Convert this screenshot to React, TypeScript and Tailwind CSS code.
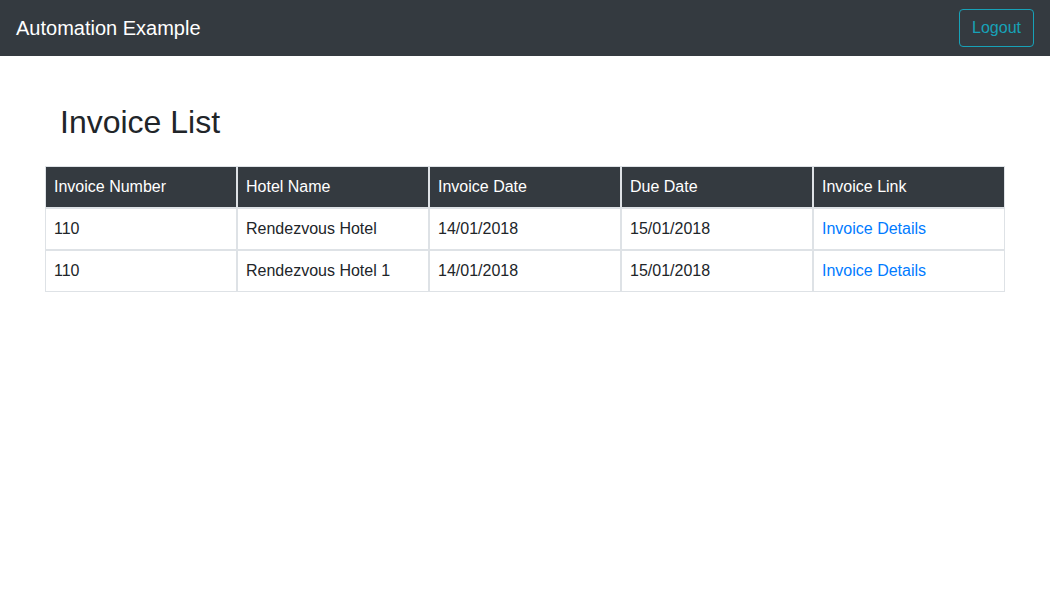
import React from 'react';

interface Invoice {
  number: string;
  hotel: string;
  invoiceDate: string;
  dueDate: string;
}

const invoices: Invoice[] = [
  { number: '110', hotel: 'Rendezvous Hotel', invoiceDate: '14/01/2018', dueDate: '15/01/2018' },
  { number: '110', hotel: 'Rendezvous Hotel 1', invoiceDate: '14/01/2018', dueDate: '15/01/2018' },
];

const columns = ['Invoice Number', 'Hotel Name', 'Invoice Date', 'Due Date', 'Invoice Link'];

const App: React.FC = () => {
  return (
    <div className="min-h-screen bg-white text-[#212529] font-['Liberation_Sans',Arial,sans-serif] text-base">
      <nav className="h-14 bg-[#343a40] flex items-center justify-between px-4">
        <span className="text-white text-xl leading-[30px]">Automation Example</span>
        <button className="h-[38px] px-3 border border-[#17a2b8] text-[#17a2b8] rounded text-base leading-6">
          Logout
        </button>
      </nav>

      <div className="w-[960px] mx-auto">
        <h2 className="px-[15px] mt-[47px] mb-[25px] text-[32px] leading-[38px] font-normal">Invoice List</h2>

        <table className="w-full border-separate border-spacing-0 border-0 table-fixed">
          <thead>
            <tr>
              {columns.map((c) => (
                <th
                  key={c}
                  className="bg-[#343a40] text-white font-normal text-left border border-[#dee2e6] px-2 py-2 leading-6"
                >
                  {c}
                </th>
              ))}
            </tr>
          </thead>
          <tbody>
            {invoices.map((inv, i) => (
              <tr key={i}>
                <td className="border border-[#dee2e6] px-2 py-2 leading-6">{inv.number}</td>
                <td className="border border-[#dee2e6] px-2 py-2 leading-6">{inv.hotel}</td>
                <td className="border border-[#dee2e6] px-2 py-2 leading-6">{inv.invoiceDate}</td>
                <td className="border border-[#dee2e6] px-2 py-2 leading-6">{inv.dueDate}</td>
                <td className="border border-[#dee2e6] px-2 py-2 leading-6">
                  <a href="#" className="text-[#007bff]">Invoice Details</a>
                </td>
              </tr>
            ))}
          </tbody>
        </table>
      </div>
    </div>
  );
};

export default App;
